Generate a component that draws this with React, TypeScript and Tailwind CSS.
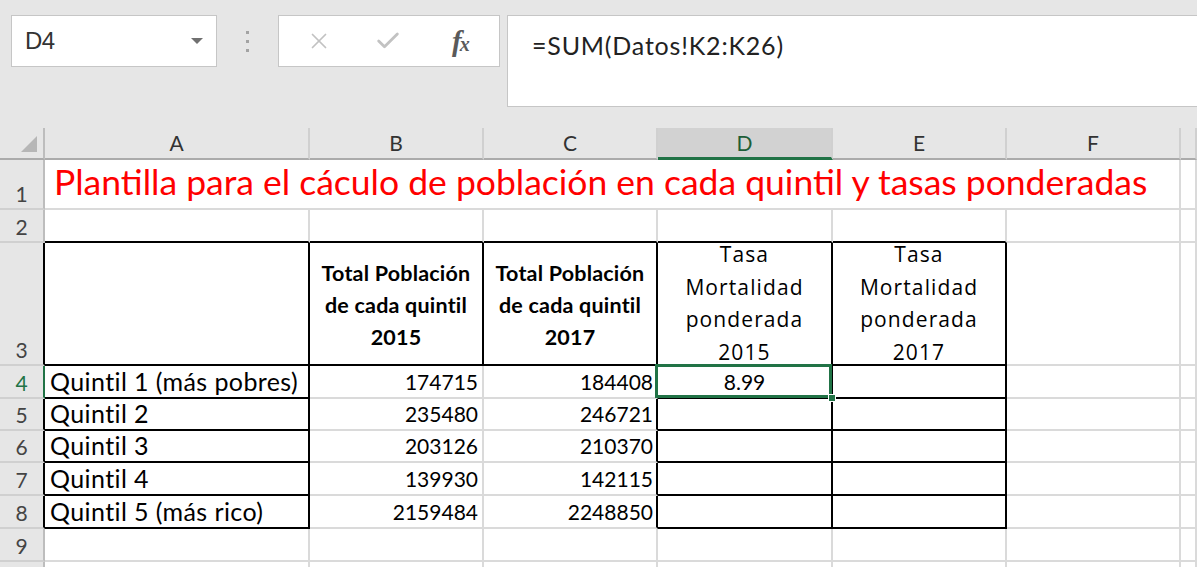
import { X, Check } from "lucide-react";

const grid = "border-[#dadada]";
const body = "font-['Lato','Liberation_Sans',sans-serif]";

function RowHead({ n, edge = "gray", className = "" }: { n: string; edge?: "gray" | "black" | "green"; className?: string }) {
  const edgeCls =
    edge === "black" ? "border-r-black" : edge === "green" ? "border-r-[#217346] bg-[#d2d2d2] text-[#217346]" : "border-r-[#bdbdbd]";
  return (
    <div
      className={`flex items-end justify-center pb-[4px] bg-[#e6e6e6] text-[#444] text-[21px] leading-none border-r-2 border-b-2 border-b-[#d0d0d0] ${edgeCls} ${className}`}
    >
      {n}
    </div>
  );
}

function Cell({ className = "", children }: { className?: string; children?: React.ReactNode }) {
  return <div className={`bg-white border-r-2 border-b-2 ${grid} text-black ${className}`}>{children}</div>;
}

const rows = [
  { n: "4", label: "Quintil 1 (más pobres)", b: "174715", c: "184408" },
  { n: "5", label: "Quintil 2", b: "235480", c: "246721" },
  { n: "6", label: "Quintil 3", b: "203126", c: "210370" },
  { n: "7", label: "Quintil 4", b: "139930", c: "142115" },
  { n: "8", label: "Quintil 5 (más rico)", b: "2159484", c: "2248850" },
];

const text = "text-[25px] leading-none tracking-[0.4px]";
const num = "text-[21px] leading-none";
const boldHead = "border-black flex flex-col items-center justify-center text-center font-bold text-[21.5px] leading-[32px] tracking-[0.2px] pt-[2px]";
const rateHead = "border-black flex flex-col items-center justify-end text-[21px] leading-[32.5px] tracking-[1.1px] text-[#222] font-['Open_Sans',sans-serif] overflow-visible";

export default function App() {
  return (
    <div className={`w-[1197px] h-[567px] overflow-hidden bg-[#e6e6e6] ${body}`}>
      {/* formula bar */}
      <div className="h-[128px] flex items-start pt-[15px] pl-[11px]">
        <div className="w-[206px] h-[52px] bg-white border border-[#c6c6c6] flex items-center justify-between pl-[13px] pr-[12px]">
          <span className="text-[24px] text-[#333] font-['Liberation_Sans',sans-serif] tracking-[-0.5px]">D4</span>
          <svg width="14" height="8" viewBox="0 0 14 8">
            <path d="M1 1h12L7 7z" fill="#707070" />
          </svg>
        </div>
        <div className="w-[61px] h-[52px] flex flex-col items-center justify-center gap-[6px]">
          <span className="w-[3px] h-[3px] bg-[#a3a3a3]" />
          <span className="w-[3px] h-[3px] bg-[#a3a3a3]" />
          <span className="w-[3px] h-[3px] bg-[#a3a3a3]" />
        </div>
        <div className="w-[222px] h-[52px] bg-white border border-[#c6c6c6] flex items-center pl-[27px]">
          <X className="w-[26px] h-[26px] text-[#c2c2c2]" strokeWidth={1.6} />
          <Check className="w-[28px] h-[28px] text-[#c2c2c2] ml-[42px]" strokeWidth={2.4} />
          <span className="ml-[50px] text-[29px] leading-none italic font-bold text-[#5a5a5a] font-['Liberation_Serif',serif] tracking-[-2px]">
            f<span className="text-[20px]">x</span>
          </span>
        </div>
        <div className="ml-[7px] flex-1 h-[92px] bg-white border border-[#c6c6c6] border-r-0 pl-[24px] pt-[17px]">
          <span className="text-[25px] leading-none tracking-[0.8px] text-[#222]">=SUM(Datos!K2:K26)</span>
        </div>
      </div>

      {/* sheet */}
      <div className="grid grid-cols-[45px_265px_174px_174px_175px_174px_174px_16px] grid-rows-[32px_50px_33px_123px_33px_32px_32px_33px_33px_33px_20px]">
        {/* column headers */}
        <div className="bg-[#e6e6e6] border-r-2 border-r-[#bdbdbd] border-b-2 border-b-[#ababab] flex items-end justify-end pr-[6px] pb-[6px]">
          <svg width="16" height="16" viewBox="0 0 16 16">
            <path d="M16 0V16H0z" fill="#b6b6b6" />
          </svg>
        </div>
        {["A", "B", "C", "D", "E", "F", ""].map((c) => (
          <div
            key={c || "g"}
            className={`flex items-center justify-center text-[21px] border-r-2 border-r-[#d0d0d0] ${
              c === "D"
                ? "bg-[#d2d2d2] text-[#1d5e38] border-b-[3px] border-b-[#217346]"
                : "bg-[#e6e6e6] text-[#333] border-b-2 border-b-[#ababab]"
            }`}
          >
            {c}
          </div>
        ))}

        {/* row 1 */}
        <RowHead n="1" />
        <Cell className="col-span-6 flex items-end pl-[9px] pb-[9px] overflow-visible whitespace-nowrap">
          <span className="text-[35.5px] leading-none text-[#ff0000]">
            Plantilla para el cáculo de población en cada quintil y tasas ponderadas
          </span>
        </Cell>
        <Cell />

        {/* row 2 */}
        <RowHead n="2" />
        <Cell className="border-b-black" />
        <Cell className="border-b-black" />
        <Cell className="border-b-black" />
        <Cell className="border-b-black" />
        <Cell className="border-b-black" />
        <Cell />
        <Cell />

        {/* row 3 */}
        <RowHead n="3" edge="black" />
        <Cell className="border-black" />
        <Cell className={boldHead}>
          <span>Total Población</span>
          <span>de cada quintil</span>
          <span>2015</span>
        </Cell>
        <Cell className={boldHead}>
          <span>Total Población</span>
          <span>de cada quintil</span>
          <span>2017</span>
        </Cell>
        <Cell className={rateHead}>
          <div className="flex flex-col items-center -mb-[4px]">
            <span>Tasa</span>
            <span>Mortalidad</span>
            <span>ponderada</span>
            <span>2015</span>
          </div>
        </Cell>
        <Cell className={rateHead}>
          <div className="flex flex-col items-center -mb-[4px]">
            <span>Tasa</span>
            <span>Mortalidad</span>
            <span>ponderada</span>
            <span>2017</span>
          </div>
        </Cell>
        <Cell />
        <Cell />

        {/* rows 4-8 */}
        {rows.map((r, i) => (
          <div key={r.n} className="contents">
            <RowHead n={r.n} edge={i === 0 ? "green" : "black"} />
            <Cell className={`border-black flex items-end pl-[5px] pb-[3px] whitespace-nowrap ${text}`}>{r.label}</Cell>
            <Cell className={`flex items-end justify-end pr-[4px] pb-[5px] ${num}`}>{r.b}</Cell>
            <Cell className={`border-r-black flex items-end justify-end pr-[3px] pb-[5px] ${num}`}>{r.c}</Cell>
            {i === 0 ? (
              <Cell className={`border-black relative flex items-end justify-center pb-[5px] ${num}`}>
                8.99
                <div className="absolute -left-[3px] -top-[2px] -right-[1px] -bottom-[1px] border-[3px] border-[#217346]" />
                <div className="absolute -right-[5px] -bottom-[5px] w-[8px] h-[8px] bg-[#217346] border border-white" />
              </Cell>
            ) : (
              <Cell className="border-black" />
            )}
            <Cell className="border-black" />
            <Cell />
            <Cell />
          </div>
        ))}

        {/* row 9 */}
        <RowHead n="9" />
        <Cell />
        <Cell />
        <Cell />
        <Cell />
        <Cell />
        <Cell />
        <Cell />

        {/* row 10 (cut off) */}
        <RowHead n="" />
        <Cell />
        <Cell />
        <Cell />
        <Cell />
        <Cell />
        <Cell />
        <Cell />
      </div>
    </div>
  );
}
